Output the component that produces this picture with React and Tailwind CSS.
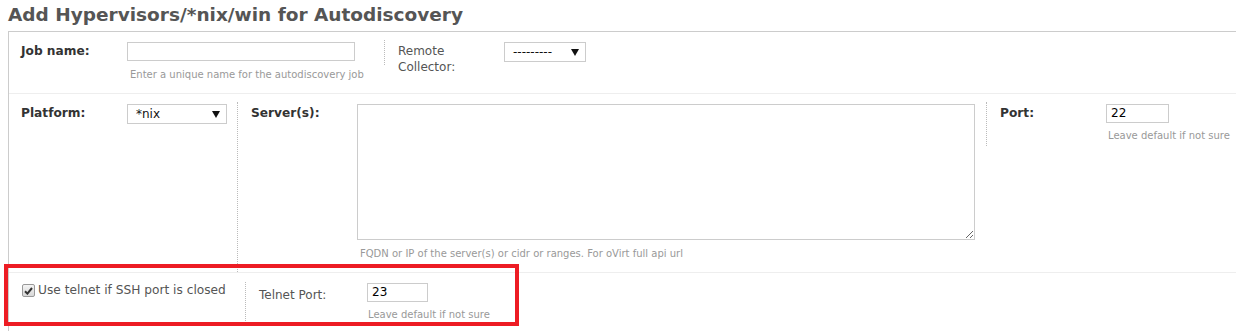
import React from "react";

function Select({ value, w }) {
  return (
    <div
      className="flex items-center justify-between border border-[#ccc] bg-white h-[20px] pl-[8px] pr-[6px] text-[12px] text-[#111]"
      style={{ width: w }}
    >
      <span className="leading-none">{value}</span>
      <svg width="8" height="7" viewBox="0 0 8 7" className="mt-[1px]">
        <path d="M0 0 L8 0 L4 7 Z" fill="#111" />
      </svg>
    </div>
  );
}

function TextInput({ value, w }) {
  return (
    <div
      className="border border-[#ccc] bg-white h-[19px] pl-[4px] text-[12px] leading-[17px] text-black"
      style={{ width: w }}
    >
      {value}
    </div>
  );
}

export default function App() {
  return (
    <div className="relative w-[1236px] h-[331px] overflow-hidden bg-white font-['DejaVu_Sans','Verdana',sans-serif]">
      <h2 className="h-[31px] pl-[8px] pt-[4px] text-[18.5px] font-bold leading-[22px] text-[#555]">
        Add Hypervisors/*nix/win for Autodiscovery
      </h2>
      <div className="ml-[8px] border-l border-t border-[#ccc] h-[300px]">
        {/* Row 1 */}
        <div className="flex h-[62px] border-b border-[#eee]">
          <div className="flex w-[375px] pl-[12px] pt-[10px]">
            <div className="w-[106px] pt-[2px] text-[12.2px] font-bold text-[#333] leading-[15px]">Job name:</div>
            <div>
              <TextInput value="" w="228px" />
              <div className="mt-[8px] pl-[3px] text-[10px] text-[#999] leading-[12px] whitespace-nowrap">
                Enter a unique name for the autodiscovery job
              </div>
            </div>
          </div>
          <div className="mt-[8px] h-[25px] border-l border-dotted border-[#bbb]" />
          <div className="flex pl-[13px] pt-[10px]">
            <div className="w-[106px] pt-[1px] text-[12px] text-[#555] leading-[16px]">
              Remote
              <br />
              Collector:
            </div>
            <Select value="---------" w="82px" />
          </div>
        </div>
        {/* Row 2 */}
        <div className="flex h-[179px] border-b border-[#eee]">
          <div className="flex w-[228px] pl-[12px] pt-[10px]">
            <div className="w-[106px] pt-[2px] text-[12.2px] font-bold text-[#333] leading-[15px]">Platform:</div>
            <Select value="*nix" w="100px" />
          </div>
          <div className="mt-[8px] border-l border-dotted border-[#bbb]" />
          <div className="flex w-[748px] pl-[13px] pt-[10px]">
            <div className="w-[106px] pt-[2px] text-[12.2px] font-bold text-[#333] leading-[15px]">Server(s):</div>
            <div>
              <textarea className="block w-[618px] h-[136px] border border-[#ccc] bg-white outline-none" />
              <div className="mt-[8px] pl-[3px] text-[10px] text-[#999] leading-[12px] whitespace-nowrap">
                FQDN or IP of the server(s) or cidr or ranges. For oVirt full api url
              </div>
            </div>
          </div>
          <div className="mt-[8px] h-[44px] border-l border-dotted border-[#bbb]" />
          <div className="flex pl-[13px] pt-[10px]">
            <div className="w-[106px] pt-[2px] text-[12.2px] font-bold text-[#333] leading-[15px]">Port:</div>
            <div>
              <TextInput value="22" w="63px" />
              <div className="mt-[7px] pl-[2px] text-[10px] text-[#999] leading-[12px] whitespace-nowrap">
                Leave default if not sure
              </div>
            </div>
          </div>
        </div>
        {/* Row 3 */}
        <div className="flex h-[58px]">
          <div className="flex w-[236px] pl-[13px] pt-[10px]">
            <div className="mt-[1px] flex h-[13px] w-[13px] items-center justify-center rounded-[2px] border border-[#999] bg-gradient-to-b from-[#f4f4f4] to-[#d8d8d8]">
              <svg width="9" height="8" viewBox="0 0 9 8">
                <path d="M1 4.2 L3.4 6.6 L8 1" stroke="#333" strokeWidth="2" fill="none" />
              </svg>
            </div>
            <div className="pl-[3px] text-[12.2px] text-[#555] leading-[15px] whitespace-nowrap">
              Use telnet if SSH port is closed
            </div>
          </div>
          <div className="mt-[9px] h-[39px] border-l border-dotted border-[#bbb]" />
          <div className="flex pl-[13px] pt-[10px]">
            <div className="w-[108px] pt-[5px] text-[12px] text-[#555] leading-[15px]">Telnet Port:</div>
            <div>
              <TextInput value="23" w="61px" />
              <div className="mt-[7px] pl-[1px] text-[10px] text-[#999] leading-[12px] whitespace-nowrap">
                Leave default if not sure
              </div>
            </div>
          </div>
        </div>
      </div>
      <div className="absolute left-[4px] top-[264px] w-[515px] h-[62px] border-[4px] border-[#ed1c24] pointer-events-none" />
    </div>
  );
}
